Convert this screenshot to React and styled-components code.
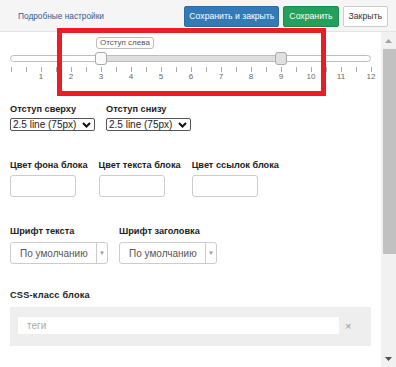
import React from "react"
import styled, { createGlobalStyle } from 'styled-components';

const GlobalStyle = createGlobalStyle`
  body {
    margin: 0;
    font-family: "Liberation Sans", Arial, sans-serif;
    background: #fff;
  }
`

const Page = styled.div`
  position: relative;
  width: 396px;
  height: 367px;
  display: flex;
  flex-direction: column;
  overflow: hidden;
`

const Header = styled.div`
  height: 32px;
  flex: none;
  box-sizing: border-box;
  background: #f5f5f5;
  border-bottom: 1px solid #e3e3e3;
  display: flex;
  align-items: center;
  justify-content: space-between;
  padding: 0 8px 0 18px;
`

const Title = styled.a`
  font-size: 8.3px;
  color: #2c5b94;
  margin-top: 1px;
`

const Buttons = styled.div`
  display: flex;
  gap: 4px;
  margin-top: 1px;
`

const Button = styled.button`
  height: 21px;
  padding: 0 ${p => p.variant === 'primary' ? 4 : 5}px;
  font-family: inherit;
  font-size: 8.7px;
  border-radius: 2px;
  border: 1px solid ${p => p.variant === 'primary' ? '#2e6da4' : p.variant === 'success' ? '#1c8a4f' : '#ccc'};
  background: ${p => p.variant === 'primary' ? '#337ab7' : p.variant === 'success' ? '#22a05c' : '#fff'};
  color: ${p => p.variant ? '#fff' : '#333'};
`

const Body = styled.div`
  flex: 1;
  display: flex;
  min-height: 0;
`

const Content = styled.div`
  flex: 1;
  padding: 0 10px;
  display: flex;
  flex-direction: column;
`

const Scrollbar = styled.div`
  width: 15px;
  background: #f1f1f1;
  display: flex;
  flex-direction: column;
`

const ScrollButton = styled.div`
  height: 17px;
  display: flex;
  align-items: center;
  justify-content: center;
`

const ScrollThumb = styled.div`
  height: 205px;
  margin-left: 2px;
  background: #c1c1c1;
`

const ScrollTrack = styled.div`
  flex: 1;
`

/* slider */

const SliderBlock = styled.div`
  position: relative;
  height: 68px;
`

const Track = styled.div`
  position: absolute;
  left: 0;
  top: 23px;
  width: 361px;
  height: 7px;
  box-sizing: border-box;
  border: 1px solid #bdbdbd;
  border-radius: 4px;
  background: #fff;
`

const Range = styled.div`
  position: absolute;
  top: 0;
  bottom: 0;
  background: #dedede;
`

const Handle = styled.div`
  position: absolute;
  top: 20px;
  width: 12px;
  height: 13px;
  box-sizing: border-box;
  border: 1px solid #aaa;
  border-radius: 3px;
  background: ${p => p.filled ? '#e0e0e0' : '#fafafa'};
`

const Tip = styled.div`
  position: absolute;
  top: 5px;
  height: 12px;
  padding: 0 3px;
  box-sizing: border-box;
  border: 1px solid #bdbdbd;
  border-radius: 3px;
  background: #fff;
  font-size: 8px;
  line-height: 10px;
  color: #555;
  white-space: nowrap;
`

const Ticks = styled.div`
  position: absolute;
  left: 1px;
  top: 35px;
  width: 361px;
  display: flex;
  justify-content: space-between;
`

const Tick = styled.div`
  width: 1px;
  height: 5px;
  background: #aaa;
`

const TickLabels = styled.div`
  position: absolute;
  left: 16px;
  top: 40px;
  display: flex;
`

const TickLabel = styled.div`
  width: 30px;
  text-align: center;
  font-size: 8px;
  line-height: 10px;
  color: #666;
`

/* form */

const Row = styled.div`
  display: flex;
  gap: 11px;
  margin-top: ${p => p.top}px;
`

const Field = styled.div`
  display: flex;
  flex-direction: column;
  gap: ${p => p.gap || 2}px;
`

const Label = styled.div`
  font-size: 9.2px;
  font-weight: bold;
  line-height: 13px;
  color: #222;
  white-space: nowrap;
  letter-spacing: ${p => p.spaced ? '0.2px' : 'normal'};
`

const NativeSelect = styled.div`
  width: 85px;
  height: 13px;
  box-sizing: border-box;
  border: 1px solid #555;
  border-radius: 2px;
  display: flex;
  align-items: center;
  justify-content: space-between;
  padding: 0 3px 0 2px;
  font-size: 10px;
  color: #222;
`

const ColorInput = styled.div`
  width: 66px;
  height: 22px;
  box-sizing: border-box;
  border: 1px solid #ccc;
  border-radius: 3px;
`

const FancySelect = styled.div`
  width: 98px;
  height: 22px;
  box-sizing: border-box;
  border: 1px solid #ccc;
  border-radius: 3px;
  display: flex;
  align-items: center;
  font-size: 10px;
  color: #555;
`

const FancyText = styled.div`
  flex: 1;
  padding-left: 9px;
`

const FancyArrow = styled.div`
  width: 10px;
  height: 100%;
  border-left: 1px solid #ccc;
  display: flex;
  align-items: center;
  justify-content: center;
  color: #999;
  font-size: 6px;
`

const TagsBox = styled.div`
  width: 361px;
  height: 39px;
  box-sizing: border-box;
  background: #eee;
  display: flex;
  align-items: center;
  padding: 0 0 2px 8px;
  gap: 6px;
`

const TagsInput = styled.div`
  width: 321px;
  height: 17px;
  background: #fff;
  font-size: 10px;
  line-height: 17px;
  color: #aaa;
  padding-left: 9px;
  box-sizing: border-box;
`

const Clear = styled.div`
  font-size: 11px;
  color: #999;
`

const Highlight = styled.div`
  position: absolute;
  left: 57px;
  top: 28px;
  width: 269px;
  height: 68px;
  box-sizing: border-box;
  border: 5px solid #ea1c24;
  pointer-events: none;
`

const Chevron = () => (
  <svg width="9" height="6" viewBox="0 0 9 6">
    <path d="M1 1 L4.5 4.5 L8 1" fill="none" stroke="#111" strokeWidth="2" />
  </svg>
)

const unit = 30
const fromVal = 3
const toVal = 9

export default function App() {
  const ticks = Array.from({ length: 25 })
  const labels = Array.from({ length: 12 }, (_, i) => i + 1)
  const lo = 1 + fromVal * unit
  const hi = 1 + toVal * unit
  return (
    <Page>
      <GlobalStyle />
      <Header>
        <Title>Подробные настройки</Title>
        <Buttons>
          <Button variant="primary">Сохранить и закрыть</Button>
          <Button variant="success">Сохранить</Button>
          <Button>Закрыть</Button>
        </Buttons>
      </Header>
      <Body>
        <Content>
          <SliderBlock>
            <Track>
              <Range style={{ left: lo - 1, width: hi - lo }} />
            </Track>
            <Tip style={{ left: lo - 5 }}>Отступ слева</Tip>
            <Handle style={{ left: lo - 6 }} />
            <Handle filled style={{ left: hi - 6 }} />
            <Ticks>
              {ticks.map((_, i) => <Tick key={i} />)}
            </Ticks>
            <TickLabels>
              {labels.map(n => <TickLabel key={n}>{n}</TickLabel>)}
            </TickLabels>
          </SliderBlock>

          <Row top={3}>
            <Field>
              <Label>Отступ сверху</Label>
              <NativeSelect>2.5 line (75px)<Chevron /></NativeSelect>
            </Field>
            <Field>
              <Label>Отступ снизу</Label>
              <NativeSelect>2.5 line (75px)<Chevron /></NativeSelect>
            </Field>
          </Row>

          <Row top={28}>
            <Field gap={3}>
              <Label>Цвет фона блока</Label>
              <ColorInput />
            </Field>
            <Field gap={3}>
              <Label>Цвет текста блока</Label>
              <ColorInput />
            </Field>
            <Field gap={3}>
              <Label>Цвет ссылок блока</Label>
              <ColorInput />
            </Field>
          </Row>

          <Row top={28}>
            <Field gap={4}>
              <Label>Шрифт текста</Label>
              <FancySelect>
                <FancyText>По умолчанию</FancyText>
                <FancyArrow>▼</FancyArrow>
              </FancySelect>
            </Field>
            <Field gap={4}>
              <Label>Шрифт заголовка</Label>
              <FancySelect>
                <FancyText>По умолчанию</FancyText>
                <FancyArrow>▼</FancyArrow>
              </FancySelect>
            </Field>
          </Row>

          <Row top={25}>
            <Field gap={5}>
              <Label spaced>CSS-класс блока</Label>
              <TagsBox>
                <TagsInput>теги</TagsInput>
                <Clear>×</Clear>
              </TagsBox>
            </Field>
          </Row>
        </Content>
        <Scrollbar>
          <ScrollButton>
            <svg width="7" height="4" viewBox="0 0 7 4"><path d="M0 4 L3.5 0 L7 4 Z" fill="#a3a3a3" /></svg>
          </ScrollButton>
          <ScrollThumb />
          <ScrollTrack />
          <ScrollButton>
            <svg width="7" height="4" viewBox="0 0 7 4"><path d="M0 0 L7 0 L3.5 4 Z" fill="#505050" /></svg>
          </ScrollButton>
        </Scrollbar>
      </Body>
      <Highlight />
    </Page>
  )
}
